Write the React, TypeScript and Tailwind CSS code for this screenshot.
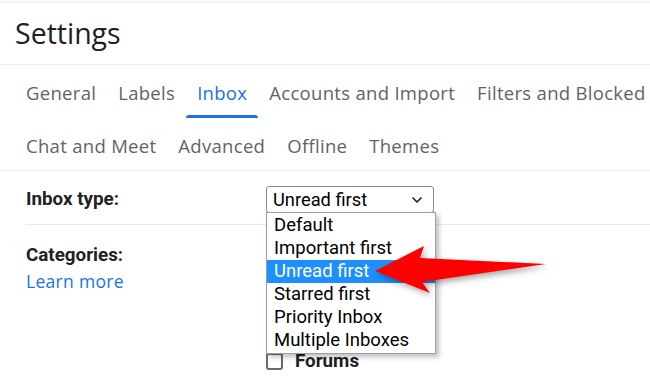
import { ChevronDown } from "lucide-react";

const ROW1 = ["General", "Labels", "Inbox", "Accounts and Import", "Filters and Blocked"];
const ROW2 = ["Chat and Meet", "Advanced", "Offline", "Themes"];
const OPTIONS = ["Default", "Important first", "Unread first", "Starred first", "Priority Inbox", "Multiple Inboxes"];

// Category checkboxes; all but the last sit behind the open menu, so only their boxes peek out
const CATEGORIES = [
  { name: "", checked: true },
  { name: "", checked: true },
  { name: "", checked: true },
  { name: "", checked: false },
  { name: "Forums", checked: false },
];

const TAB_FONT = { fontFamily: '"Open Sans", Roboto, sans-serif' };
const BODY_FONT = { fontFamily: 'Roboto, "Liberation Sans", Arial, sans-serif' };

function Tab({ label }: { label: string }) {
  const active = label === "Inbox";
  return (
    <div className="relative flex h-full shrink-0 items-center px-[11px] pt-[3px]">
      <span
        className={`whitespace-nowrap text-[18.5px] tracking-[0.3px] ${active ? "text-[#1a73e8]" : "text-[#5f6368]"}`}
      >
        {label}
      </span>
      {active && <div className="absolute inset-x-0 bottom-0 h-[3px] rounded-t-[3px] bg-[#1a73e8]" />}
    </div>
  );
}

function Arrow() {
  return (
    <svg
      className="pointer-events-none absolute left-0 top-0"
      width="650"
      height="383"
      viewBox="0 0 650 383"
      style={{ filter: "drop-shadow(2px 3px 3px rgba(0,0,0,0.35))" }}
    >
      <polygon points="375,271 424,246 420,258 546,264 422,282 430,293" fill="#ff0000" />
    </svg>
  );
}

export default function App() {
  return (
    <div className="relative h-[383px] w-[650px] overflow-hidden bg-white text-[#202124]" style={BODY_FONT}>
      <div className="mt-px border-t-2 border-[#f1f3f4]" />

      {/* header */}
      <div className="flex h-[62px] items-center border-b border-[#eceff1] pl-[15px]">
        <h1 className="text-[28.5px] text-[#202124]" style={TAB_FONT}>
          Settings
        </h1>
      </div>

      {/* tabs */}
      <div className="pl-[15px]" style={TAB_FONT}>
        <div className="flex h-[53px] items-stretch">
          {ROW1.map((t) => (
            <Tab key={t} label={t} />
          ))}
        </div>
        <div className="flex h-[52px] items-stretch">
          {ROW2.map((t) => (
            <Tab key={t} label={t} />
          ))}
        </div>
      </div>

      <div className="border-b border-[#eceff1]" />

      {/* inbox type */}
      <div className="pl-[26px]">
        <div className="flex h-[54px] items-center border-b border-[#e8eaed] pt-[4px]">
          <div className="w-[240px] text-[18.8px] font-bold">Inbox type:</div>
          <div className="flex h-[27px] w-[168px] items-center justify-between rounded-[3px] border border-[#8a8a8a] pl-[6px] pr-[8px] text-[18.3px] text-black">
            <span>Unread first</span>
            <ChevronDown size={16} strokeWidth={2.5} className="text-[#222]" />
          </div>
        </div>

        {/* categories */}
        <div className="flex pt-[18px]">
          <div className="w-[240px]">
            <div className="text-[18.8px] font-bold leading-[24px]">Categories:</div>
            <div className="mt-[2px] text-[17.5px] leading-[24px] tracking-[0.3px] text-[#1a73e8]" style={TAB_FONT}>
              Learn more
            </div>
          </div>
          <div className="flex flex-col gap-[8px] pt-[10px]">
            {CATEGORIES.map((c, i) => (
              <div key={i} className="flex h-[17px] items-center gap-[12px]">
                <div
                  className={`h-[17px] w-[17px] rounded-[3px] border-2 ${c.checked ? "border-[#1a73e8] bg-[#1a73e8]" : "border-[#6b6b6b] bg-white"}`}
                />
                {c.name && <span className="text-[18.8px] font-bold">{c.name}</span>}
              </div>
            ))}
          </div>
        </div>
      </div>

      {/* open select menu */}
      <div className="absolute left-[266px] top-[212px] w-[170px] border border-[#a0a0a0] bg-white py-[1px] text-[18.5px] text-black shadow-[3px_3px_5px_rgba(0,0,0,0.25)]">
        {OPTIONS.map((o) => (
          <div
            key={o}
            className={`flex h-[23px] items-center pl-[7px] pt-[1px] ${o === "Unread first" ? "bg-[#1e8fff] text-white" : ""}`}
          >
            {o}
          </div>
        ))}
      </div>

      <Arrow />
    </div>
  );
}
